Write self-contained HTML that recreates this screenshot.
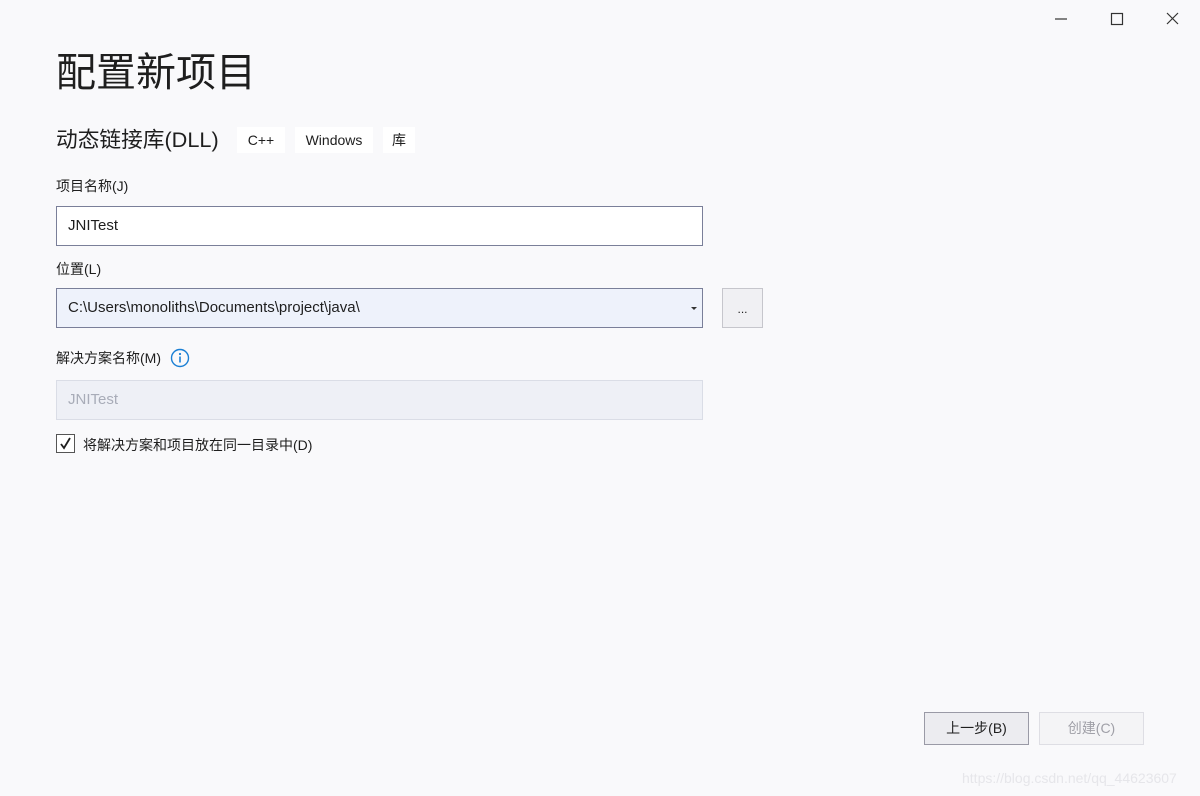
<!DOCTYPE html>
<html><head><meta charset="utf-8"><style>
*{margin:0;padding:0;box-sizing:border-box}
body{width:1200px;height:796px;background:#f9f9fb;font-family:"Liberation Sans","Noto Sans CJK SC",sans-serif;color:#1e1e1e;position:relative;overflow:hidden}
.a{position:absolute}
h1{position:absolute;left:56px;top:46px;font-size:40px;font-weight:400;line-height:54px;color:#1e1e1e}
.sub{left:56px;top:125px;font-size:21.7px;line-height:30px}
.tag{top:127px;height:26px;background:#fff;font-size:14px;line-height:26px;text-align:center;color:#1e1e1e}
.lbl{font-size:14px;line-height:20px;left:56px}
.box{left:56px;width:647px;height:40px;border:1px solid #7a7f99;background:#fff;font-size:15px;line-height:38px;padding-left:11px}
.btn{height:33px;font-size:14px;line-height:31px;text-align:center}
</style></head><body>
<svg class="a" style="left:1050px;top:11px" width="140" height="16" viewBox="0 0 140 16">
<path d="M5 8H17" stroke="#333" stroke-width="1.2" fill="none"/>
<rect x="61.5" y="2.5" width="11" height="11" stroke="#333" stroke-width="1.2" fill="none"/>
<path d="M117 2L128 13M128 2L117 13" stroke="#333" stroke-width="1.2" fill="none"/>
</svg>
<h1>配置新项目</h1>
<div class="a sub">动态链接库(DLL)</div>
<div class="a tag" style="left:237px;width:48px">C++</div>
<div class="a tag" style="left:295px;width:78px">Windows</div>
<div class="a tag" style="left:383px;width:32px">库</div>
<div class="a lbl" style="top:176px">项目名称(J)</div>
<div class="a box" style="top:206px">JNITest</div>
<div class="a lbl" style="top:259px">位置(L)</div>
<div class="a box" style="top:288px;background:#eef2fb">C:\Users\monoliths\Documents\project\java\</div>
<div class="a" style="left:691px;top:307px;width:0;height:0;border-left:3px solid transparent;border-right:3px solid transparent;border-top:3px solid #333"></div>
<div class="a" style="left:722px;top:288px;width:41px;height:40px;border:1px solid #c6c6cc;background:#f0f0f3;font-size:12px;line-height:40px;text-align:center">...</div>
<div class="a lbl" style="top:348px">解决方案名称(M)</div>
<svg class="a" style="left:170px;top:348px" width="20" height="20" viewBox="0 0 20 20"><circle cx="10" cy="10" r="8.5" fill="none" stroke="#1a7fd4" stroke-width="1.4"/><circle cx="10" cy="6" r="1.1" fill="#1a7fd4"/><path d="M10 8.5V14.5" stroke="#1a7fd4" stroke-width="1.6"/></svg>
<div class="a box" style="top:380px;background:#eef0f6;border-color:#dadde6;color:#a8acb8">JNITest</div>
<div class="a" style="left:56px;top:434px;width:19px;height:19px;border:1px solid #555;background:#fff"></div>
<svg class="a" style="left:58px;top:436px" width="15" height="15" viewBox="0 0 15 15"><path d="M3 8L6 12L12 2" stroke="#1e1e1e" stroke-width="1.8" fill="none"/></svg>
<div class="a" style="left:83px;top:435px;font-size:14px;line-height:20px">将解决方案和项目放在同一目录中(D)</div>
<div class="a btn" style="left:924px;top:712px;width:105px;border:1px solid #9a9aa6;background:#ececf0">上一步(B)</div>
<div class="a btn" style="left:1039px;top:712px;width:105px;border:1px solid #dedee4;background:#f4f4f6;color:#a0a0a8">创建(C)</div>
<div class="a" style="left:962px;top:770px;font-size:14px;color:#e6e6ea">https://blog.csdn.net/qq_44623607</div>
</body></html>
